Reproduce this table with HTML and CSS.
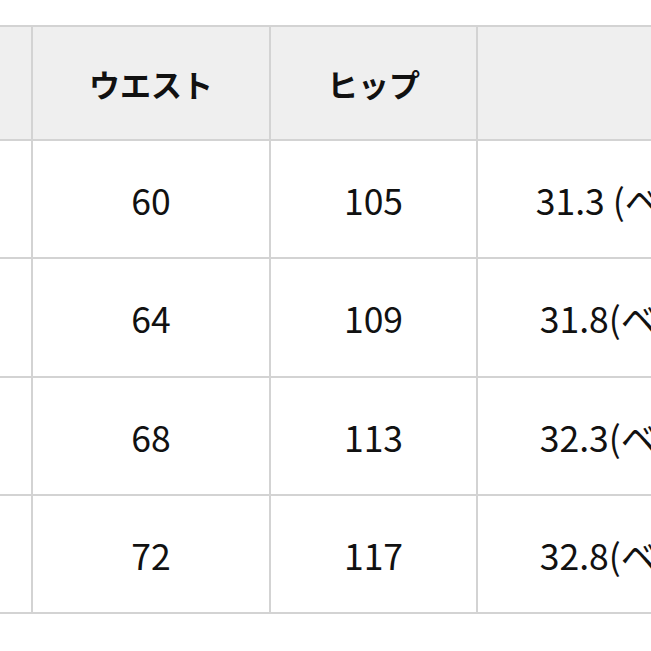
FILE: index.html
```html
<!DOCTYPE html>
<html lang="ja">
<head>
<meta charset="utf-8">
<link rel="stylesheet" href="styles.css">
</head>
<body>
<div class="wrap">
<table class="size">
  <thead>
    <tr class="head">
      <th class="c0"></th>
      <th class="c1">ウエスト</th>
      <th class="c2">ヒップ</th>
      <th class="c3">股上</th>
    </tr>
  </thead>
  <tbody>
    <tr class="row"><td class="c0"></td><td>60</td><td>105</td><td>31.3 (ベルト込み)</td></tr>
    <tr class="row tall"><td class="c0"></td><td>64</td><td>109</td><td>31.8(ベルト込み)</td></tr>
    <tr class="row"><td class="c0"></td><td>68</td><td>113</td><td>32.3(ベルト込み)</td></tr>
    <tr class="row"><td class="c0"></td><td>72</td><td>117</td><td>32.8(ベルト込み)</td></tr>
  </tbody>
</table>
</div>
</body>
</html>
```

FILE: styles.css
```css
html, body {
  margin: 0;
  padding: 0;
  background: #ffffff;
  width: 651px;
  height: 651px;
  overflow: hidden;
}
.wrap {
  padding-top: 25px;
  margin-left: -40px;
}
.size {
  border-collapse: collapse;
  table-layout: fixed;
  width: 909px;
  font-family: "Noto Sans CJK JP", "Noto Sans", sans-serif;
  color: #111111;
}
.size th, .size td {
  border: 2px solid #d3d3d3;
  text-align: center;
  vertical-align: middle;
  padding: 0;
  white-space: nowrap;
  overflow: hidden;
}
.size th {
  background: #efefef;
  font-size: 31px;
  font-weight: 700;
}
.size td {
  font-size: 35.5px;
  font-weight: 400;
}
.size .c0 { width: 69px; }
.size .c1 { width: 236px; }
.size .c2 { width: 205px; }
.size .c3 { width: 394px; }
.size th.c3 { text-indent: 22px; }
.head { height: 114px; }
.row { height: 118px; }
.row.tall { height: 119px; }
```
